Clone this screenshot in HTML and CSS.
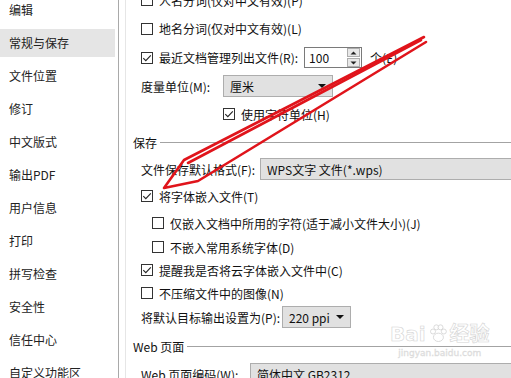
FILE: index.html
```html
<!DOCTYPE html>
<html>
<head>
<meta charset="utf-8">
<link rel="stylesheet" href="styles.css">
</head>
<body>
<div class="app">
  <nav class="side">
    <div class="item">编辑</div>
    <div class="item sel">常规与保存</div>
    <div class="item">文件位置</div>
    <div class="item">修订</div>
    <div class="item">中文版式</div>
    <div class="item">输出PDF</div>
    <div class="item">用户信息</div>
    <div class="item">打印</div>
    <div class="item">拼写检查</div>
    <div class="item">安全性</div>
    <div class="item">信任中心</div>
    <div class="item">自定义功能区</div>
  </nav>
  <main class="panel">
    <div class="row h28"><svg class="cb" viewBox="0 0 12 12"><rect x="0.5" y="0.5" width="11" height="11"/></svg><span>人名分词(仅对中文有效)(P)</span></div>
    <div class="row h29"><svg class="cb" viewBox="0 0 12 12"><rect x="0.5" y="0.5" width="11" height="11"/></svg><span>地名分词(仅对中文有效)(L)</span></div>
    <div class="row h29"><svg class="cb" viewBox="0 0 12 12"><rect x="0.5" y="0.5" width="11" height="11"/><path d="M2.3 6.2 L4.8 8.7 L9.8 3.4"/></svg><span>最近文档管理列出文件(R):</span>
      <div class="num"><span class="numval">100</span><div class="spin"><div class="sbtn"><svg viewBox="0 0 7 4"><path d="M0.5 3.5 L3.5 0.5 L6.5 3.5Z"/></svg></div><div class="sbtn"><svg viewBox="0 0 7 4"><path d="M0.5 0.5 L3.5 3.5 L6.5 0.5Z"/></svg></div></div></div>
      <span class="unit">个(E)</span></div>
    <div class="row h28"><span class="lbl-m">度量单位(M):</span>
      <div class="select sel-m"><span>厘米</span><svg class="tri" viewBox="0 0 8 4"><path d="M0 0 L8 0 L4 4Z"/></svg></div></div>
    <div class="row h28 ind-m"><svg class="cb" viewBox="0 0 12 12"><rect x="0.5" y="0.5" width="11" height="11"/><path d="M2.3 6.2 L4.8 8.7 L9.8 3.4"/></svg><span>使用字符单位(H)</span></div>
    <div class="head h28"><span>保存</span></div>
    <div class="row h26"><span class="lbl-f">文件保存默认格式(F):</span>
      <div class="select sel-f"><span>WPS文字 文件(*.wps)</span></div></div>
    <div class="row h28"><svg class="cb" viewBox="0 0 12 12"><rect x="0.5" y="0.5" width="11" height="11"/><path d="M2.3 6.2 L4.8 8.7 L9.8 3.4"/></svg><span>将字体嵌入文件(T)</span></div>
    <div class="row h26 ind-s"><svg class="cb" viewBox="0 0 12 12"><rect x="0.5" y="0.5" width="11" height="11"/></svg><span>仅嵌入文档中所用的字符(适于减小文件大小)(J)</span></div>
    <div class="row h22 ind-s"><svg class="cb" viewBox="0 0 12 12"><rect x="0.5" y="0.5" width="11" height="11"/></svg><span>不嵌入常用系统字体(D)</span></div>
    <div class="row h24"><svg class="cb" viewBox="0 0 12 12"><rect x="0.5" y="0.5" width="11" height="11"/><path d="M2.3 6.2 L4.8 8.7 L9.8 3.4"/></svg><span>提醒我是否将云字体嵌入文件中(C)</span></div>
    <div class="row h22"><svg class="cb" viewBox="0 0 12 12"><rect x="0.5" y="0.5" width="11" height="11"/></svg><span>不压缩文件中的图像(N)</span></div>
    <div class="row h26"><span class="lbl-p">将默认目标输出设置为(P):</span>
      <div class="select sel-p"><span>220 ppi</span><svg class="tri" viewBox="0 0 8 4"><path d="M0 0 L8 0 L4 4Z"/></svg></div></div>
    <div class="head h32"><span>Web 页面</span></div>
    <div class="row h24"><span class="lbl-w">Web 页面编码(W):</span>
      <div class="select sel-w"><span>简体中文 GB2312</span></div></div>
  </main>
</div>
<svg class="arrow" viewBox="0 0 511 378">
  <polyline points="424,37 184,160 164,188 198,181 426,42"/>
  <path d="M421,40 L188,163"/>
</svg>
<div class="wm">
  <div class="wm-logo"><span>Bai</span><svg class="paw" viewBox="0 0 24 24"><circle cx="6" cy="9" r="3"/><circle cx="10" cy="4" r="3"/><circle cx="15" cy="4" r="3"/><circle cx="19" cy="9" r="3"/><ellipse cx="12.5" cy="16" rx="6" ry="5"/></svg><span>经验</span></div>
  <div class="wm-url">jingyan.baidu.com</div>
</div>
</body>
</html>
```
FILE: styles.css
```css
html, body {
  margin: 0;
  padding: 0;
  background: #fff;
}
body {
  width: 511px;
  height: 378px;
  overflow: hidden;
  position: relative;
  font-family: "Noto Sans CJK SC", "Microsoft YaHei", sans-serif;
  font-size: 12px;
  color: #111;
}
.app {
  display: flex;
  height: 378px;
}
.side {
  width: 118px;
  flex: none;
  border-right: 1px solid #a9a9a9;
  display: flex;
  flex-direction: column;
  gap: 5px;
  margin-top: -4px;
  padding-bottom: 4px;
}
.item {
  height: 28px;
  line-height: 28px;
  padding-left: 9px;
  margin-right: 3px;
  color: #222;
  white-space: nowrap;
  flex: none;
}
.item.sel {
  background: #e5e5e5;
}
.panel {
  margin-left: 6px;
  border-left: 1px solid #e6e6e6;
  flex: 1;
  display: flex;
  flex-direction: column;
  margin-top: -14px;
  padding-left: 15px;
  min-width: 0;
}
.row {
  display: flex;
  align-items: center;
  white-space: nowrap;
  flex: none;
}
.h22 { height: 22px; }
.h24 { height: 24px; }
.h26 { height: 26px; }
.h28 { height: 28px; }
.h29 { height: 29px; }
.h32 { height: 32px; }
.ind-m { padding-left: 82px; }
.ind-s { padding-left: 11px; }
.cb {
  width: 12px;
  height: 12px;
  flex: none;
  margin-right: 6px;
}
.cb rect {
  fill: #fff;
  stroke: #333;
  stroke-width: 1;
}
.cb path {
  fill: none;
  stroke: #222;
  stroke-width: 1.1;
}
.head {
  display: flex;
  align-items: center;
  margin-left: -8px;
  flex: none;
}
.head::after {
  content: "";
  flex: 1;
  border-top: 1px solid #a3a3a3;
  margin-left: 3px;
}
.num {
  margin-left: 6px;
  width: 56px;
  height: 19px;
  border: 1px solid #7a7a7a;
  display: flex;
  align-items: center;
  justify-content: space-between;
  background: #fff;
}
.numval {
  padding-left: 4px;
}
.spin {
  width: 13px;
  margin-right: 1px;
  display: flex;
  flex-direction: column;
  gap: 1px;
}
.sbtn {
  height: 7px;
  border: 1px solid #adadad;
  background: #e8e8e8;
  display: flex;
  align-items: center;
  justify-content: center;
}
.sbtn svg {
  width: 7px;
  height: 4px;
}
.sbtn path {
  fill: #222;
}
.unit {
  margin-left: 8px;
}
.select {
  height: 20px;
  border: 1px solid #adadad;
  background: #e1e1e1;
  display: flex;
  align-items: center;
  justify-content: space-between;
  padding-left: 6px;
  padding-right: 6px;
  flex: none;
}
.tri {
  width: 8px;
  height: 4px;
}
.tri path {
  fill: #111;
}
.lbl-m { width: 82px; flex: none; }
.lbl-f { width: 119px; flex: none; }
.lbl-p { width: 141px; flex: none; }
.lbl-w { width: 109px; flex: none; }
.sel-m { width: 96px; }
.sel-f { width: 270px; }
.sel-p { width: 55px; }
.sel-w { width: 270px; }
.arrow {
  position: absolute;
  left: 0;
  top: 0;
  width: 511px;
  height: 378px;
  pointer-events: none;
}
.arrow polyline, .arrow path {
  fill: none;
  stroke: #e0141b;
  stroke-width: 2.6;
  stroke-linejoin: round;
  stroke-linecap: round;
}
.wm {
  position: absolute;
  left: 390px;
  top: 322px;
  pointer-events: none;
  color: rgba(255,255,255,0.6);
  text-align: center;
}
.wm-logo {
  display: flex;
  align-items: center;
  font-family: "DejaVu Sans", "Noto Sans CJK SC", sans-serif;
  font-size: 20px;
  font-weight: bold;
  -webkit-text-stroke: 0.6px #d4d4d4;
  line-height: 24px;
}
.paw {
  width: 20px;
  height: 20px;
  margin: 0 2px;
}
.paw circle, .paw ellipse {
  fill: rgba(255,255,255,0.6);
  stroke: #d4d4d4;
  stroke-width: 1;
}
.wm-url {
  font-family: "DejaVu Sans", sans-serif;
  font-size: 9px;
  color: #e4e4e4;
  -webkit-text-stroke: 0.3px #d8d8d8;
  margin-top: 2px;
}
```
